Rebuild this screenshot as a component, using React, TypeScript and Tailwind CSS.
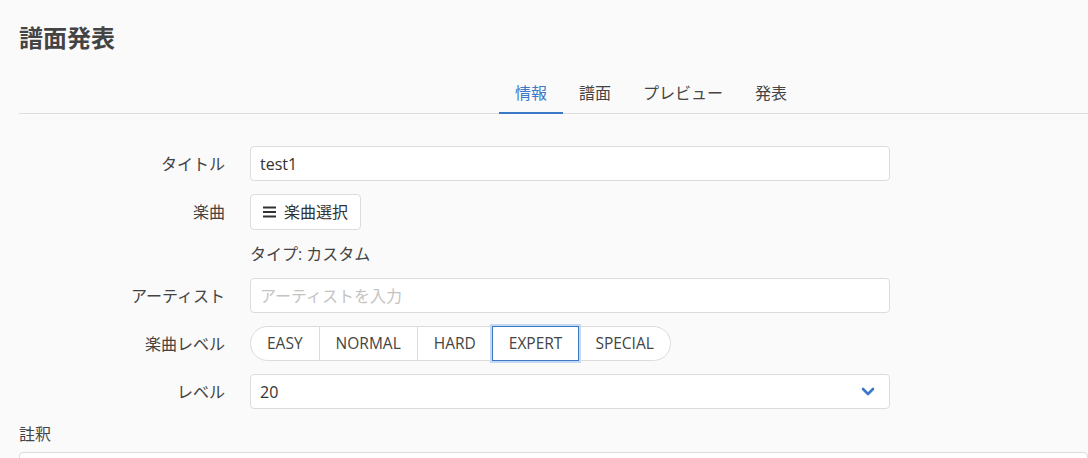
import React, { useState } from 'react';

const LEVELS = ['EASY', 'NORMAL', 'HARD', 'EXPERT', 'SPECIAL'];
const TABS = ['情報', '譜面', 'プレビュー', '発表'];

const font = "font-['Open_Sans','Noto_Sans_CJK_JP',sans-serif]";

const Row: React.FC<{ label: string; children: React.ReactNode; className?: string }> = ({ label, children, className }) => (
  <div className={`flex items-center ${className ?? ''}`}>
    <div className="w-[206px] shrink-0 text-right text-[16px] text-[#444]">{label}</div>
    <div className="ml-[25px] w-[640px]">{children}</div>
  </div>
);

export default function App() {
  const [tab, setTab] = useState('情報');
  const [level, setLevel] = useState('EXPERT');

  return (
    <div className={`min-h-screen bg-[#fafafa] pl-[19px] ${font} text-[#333]`}>
      <h1 className="pt-[23px] text-[24px] font-bold leading-[30px] text-[#444]">譜面発表</h1>

      {/* Tabs */}
      <div className="mt-[21px] flex h-[40px] border-b border-[#dedede] pl-[480px]">
        {TABS.map((t) => (
          <button
            key={t}
            onClick={() => setTab(t)}
            className={`-mb-px px-4 text-[16px] ${
              tab === t ? 'border-b-2 border-[#3c78c8] text-[#3c78c8]' : 'border-b-2 border-transparent text-[#444]'
            }`}
          >
            {t}
          </button>
        ))}
      </div>

      {/* Form */}
      <div className="pt-[32px]">
        <Row label="タイトル">
          <input
            defaultValue="test1"
            className="h-[35px] w-full rounded border border-[#dcdcdc] bg-white px-[9px] text-[16px] text-[#333] outline-none"
          />
        </Row>

        <Row label="楽曲" className="mt-[13px]">
          <button className="flex h-[36px] items-center gap-[8px] rounded border border-[#dcdcdc] bg-white px-[12px] text-[16px] text-[#333]">
            <svg width="13" height="12" viewBox="0 0 13 12" fill="#333">
              <rect x="0" y="0.5" width="13" height="2" />
              <rect x="0" y="5" width="13" height="2" />
              <rect x="0" y="9.5" width="13" height="2" />
            </svg>
            楽曲選択
          </button>
        </Row>

        <div className="ml-[231px] mt-[12px] h-[24px] text-[16px] leading-[24px] text-[#444]">タイプ: カスタム</div>

        <Row label="アーティスト" className="mt-[12px]">
          <input
            placeholder="アーティストを入力"
            className="h-[35px] w-full rounded border border-[#dcdcdc] bg-white px-[9px] text-[16px] text-[#333] outline-none placeholder:text-[#c4c4c4]"
          />
        </Row>

        <Row label="楽曲レベル" className="mt-[13px]">
          <div className="inline-flex h-[35px] rounded-full border border-[#dcdcdc] bg-white">
            {LEVELS.map((l, i) => {
              const active = level === l;
              const afterActive = i > 0 && level === LEVELS[i - 1];
              return (
                <button
                  key={l}
                  onClick={() => setLevel(l)}
                  className={`px-[16px] text-[15.5px] text-[#444] ${i === 0 ? 'rounded-l-full' : ''} ${
                    i === LEVELS.length - 1 ? 'rounded-r-full' : ''
                  } ${
                    active
                      ? 'relative -my-px border border-[#3c78c8] shadow-[0_0_0_2px_#c6d9f2]'
                      : i > 0 && !afterActive
                        ? 'border-l border-[#dcdcdc]'
                        : ''
                  }`}
                >
                  {l}
                </button>
              );
            })}
          </div>
        </Row>

        <Row label="レベル" className="mt-[13px]">
          <div className="flex h-[35px] w-full items-center justify-between rounded border border-[#dcdcdc] bg-white pl-[9px] pr-[14px] text-[16px] text-[#333]">
            <span>20</span>
            <svg width="14" height="9" viewBox="0 0 14 9" fill="none" stroke="#3c78c8" strokeWidth="2.6" strokeLinecap="round" strokeLinejoin="round">
              <path d="M2 2l5 5 5-5" />
            </svg>
          </div>
        </Row>

        <div className="mt-[13px] text-[16px] text-[#444]">註釈</div>
        <div className="mt-[6px] h-[40px] rounded-t border border-[#dcdcdc] bg-white" />
      </div>
    </div>
  );
}
